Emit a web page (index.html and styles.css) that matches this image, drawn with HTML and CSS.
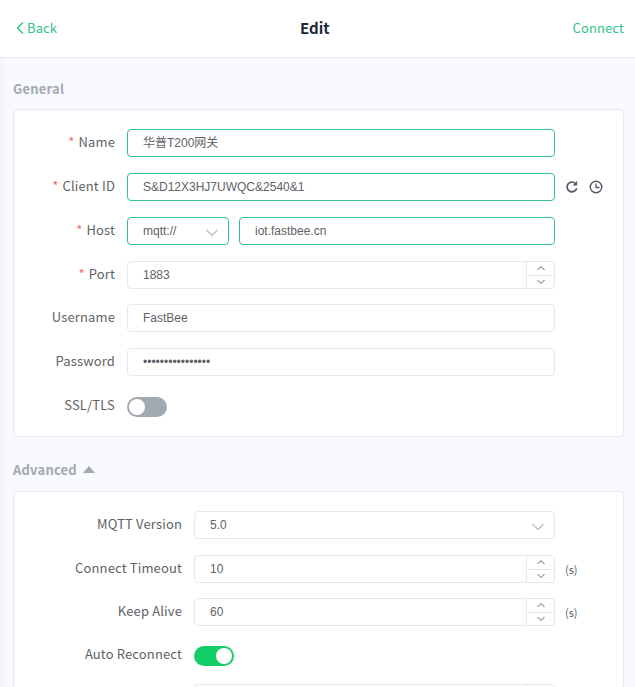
FILE: index.html
```html
<!DOCTYPE html>
<html lang="en">
<head>
<meta charset="utf-8">
<title>Edit</title>
<link rel="stylesheet" href="styles.css">
</head>
<body>
<div class="page">
  <header class="topbar">
    <a class="back"><svg class="back-icon" viewBox="0 0 8 14" width="8" height="14"><path d="M7 1.500 1.500 7 7 12.500" fill="none" stroke="currentColor" stroke-width="1.400"/></svg>Back</a>
    <h1 class="title">Edit</h1>
    <a class="connect">Connect</a>
  </header>

  <main class="content">
    <h2 class="section-title">General</h2>
    <section class="card card-general">
      <div class="row">
        <label class="label"><span class="req">*</span>Name</label>
        <div class="field field-active">华普T200网关</div>
      </div>
      <div class="row">
        <label class="label"><span class="req">*</span>Client ID</label>
        <div class="field field-active">S&amp;D12X3HJ7UWQC&amp;2540&amp;1</div>
        <div class="tools">
          <svg class="tool" viewBox="0 0 14 14" width="14" height="14"><path d="M11.700 8.200A4.900 4.900 0 1 1 10.300 3.300" fill="none" stroke="#555b66" stroke-width="1.700"/><path d="M12.200 .8v4.600H7.600z" fill="#555b66"/></svg>
          <svg class="tool" viewBox="0 0 14 14" width="14" height="14"><circle cx="7" cy="7" r="5.800" fill="none" stroke="#555b66" stroke-width="1.400"/><path d="M7 3.500V7.500H10.500" fill="none" stroke="#555b66" stroke-width="1.300"/></svg>
        </div>
      </div>
      <div class="row">
        <label class="label"><span class="req">*</span>Host</label>
        <div class="host">
          <div class="field field-active select-protocol">mqtt://<svg class="chevron" viewBox="0 0 14 8" width="14" height="8"><path d="M1.500 1 7 6.500 12.500 1" fill="none" stroke="#c0c4cc" stroke-width="1.500"/></svg></div>
          <div class="field field-active">iot.fastbee.cn</div>
        </div>
      </div>
      <div class="row row-tight">
        <label class="label"><span class="req">*</span>Port</label>
        <div class="field">1883
          <div class="spinner">
            <span class="spin"><svg viewBox="0 0 10 6" width="10" height="6"><path d="M1.500 5 5 1.500 8.500 5" fill="none" stroke="#606266" stroke-width="1"/></svg></span>
            <span class="spin"><svg viewBox="0 0 10 6" width="10" height="6"><path d="M1.500 1 5 4.500 8.500 1" fill="none" stroke="#606266" stroke-width="1"/></svg></span>
          </div>
        </div>
      </div>
      <div class="row">
        <label class="label">Username</label>
        <div class="field">FastBee</div>
      </div>
      <div class="row">
        <label class="label">Password</label>
        <div class="field">••••••••••••••••</div>
      </div>
      <div class="row row-switch">
        <label class="label">SSL/TLS</label>
        <span class="switch"></span>
      </div>
    </section>

    <h2 class="section-title section-advanced">Advanced<span class="caret"></span></h2>
    <section class="card card-advanced">
      <div class="row">
        <label class="label">MQTT Version</label>
        <div class="field">5.0<svg class="chevron" viewBox="0 0 14 8" width="14" height="8"><path d="M1.500 1 7 6.500 12.500 1" fill="none" stroke="#c0c4cc" stroke-width="1.500"/></svg></div>
      </div>
      <div class="row row-tight">
        <label class="label">Connect Timeout</label>
        <div class="field">10
          <div class="spinner">
            <span class="spin"><svg viewBox="0 0 10 6" width="10" height="6"><path d="M1.500 5 5 1.500 8.500 5" fill="none" stroke="#606266" stroke-width="1"/></svg></span>
            <span class="spin"><svg viewBox="0 0 10 6" width="10" height="6"><path d="M1.500 1 5 4.500 8.500 1" fill="none" stroke="#606266" stroke-width="1"/></svg></span>
          </div>
        </div>
        <span class="unit">(s)</span>
      </div>
      <div class="row">
        <label class="label">Keep Alive</label>
        <div class="field">60
          <div class="spinner">
            <span class="spin"><svg viewBox="0 0 10 6" width="10" height="6"><path d="M1.500 5 5 1.500 8.500 5" fill="none" stroke="#606266" stroke-width="1"/></svg></span>
            <span class="spin"><svg viewBox="0 0 10 6" width="10" height="6"><path d="M1.500 1 5 4.500 8.500 1" fill="none" stroke="#606266" stroke-width="1"/></svg></span>
          </div>
        </div>
        <span class="unit">(s)</span>
      </div>
      <div class="row row-switch row-reconnect">
        <label class="label">Auto Reconnect</label>
        <span class="switch switch-on"></span>
      </div>
      <div class="row">
        <label class="label"></label>
        <div class="field">
          <div class="spinner"></div>
        </div>
      </div>
    </section>
  </main>
</div>
</body>
</html>
```
FILE: styles.css
```css
* { box-sizing: border-box; }
html, body { margin: 0; padding: 0; height: 100%; overflow: hidden; }
body {
  font-family: "Noto Sans CJK SC", "Noto Sans", sans-serif;
  font-size: 13px;
  color: #606266;
  background: #f9fafe;
}
.page { height: 687px; overflow: hidden; position: relative; box-shadow: inset 5px 0 5px -4px rgba(40, 50, 90, .06); }
.topbar {
  height: 58px;
  display: flex;
  align-items: center;
  justify-content: space-between;
  padding: 0 11px 2px 16px;
  background: #fff;
  border-bottom: 1px solid #e6e8f1;
  color: #34c388;
  font-size: 13px;
  letter-spacing: .12px;
}
.back { display: flex; align-items: center; gap: 3px; }
.back-icon { display: block; }
.title { margin: 0; font-size: 15px; font-weight: 700; color: #1d2a38; letter-spacing: 0; }
.content { padding: 0 11px 0 13px; }
.section-title {
  margin: 0;
  padding-top: 22px;
  height: 51px;
  font-size: 13px;
  line-height: 18px;
  font-weight: 700;
  letter-spacing: .2px;
  color: #a2a9b0;
  display: flex;
  align-items: flex-start;
}
.section-advanced { padding-top: 24px; height: 54px; }
.caret {
  width: 0; height: 0;
  margin: 5px 0 0 6px;
  border: 6px solid transparent;
  border-top: 0;
  border-bottom: 7px solid #a2a9b0;
}
.card {
  background: #fff;
  border: 1px solid #e6e8f1;
  border-radius: 4px;
  padding-top: 19px;
}
.card-general { height: 328px; }
.card-advanced { height: 260px; }
.row {
  display: flex;
  align-items: center;
  height: 28px;
  margin-bottom: 16px;
}
.row-tight { margin-bottom: 15px; }
.row-switch { height: 20px; margin-top: 21px; }
.row-reconnect { margin-top: 20px; margin-bottom: 18px; }
.label {
  width: 113px;
  flex: none;
  padding-right: 12px;
  text-align: right;
  line-height: 20px;
  letter-spacing: .14px;
  margin-top: -3px;
}
.row-switch .label { margin-top: -4px; }
.card-advanced .label { width: 180px; }
.req { color: #f56c6c; margin-right: 4px; }
.field {
  position: relative;
  width: 428px;
  flex: none;
  height: 28px;
  line-height: 26px;
  padding-left: 15px;
  font-family: "Liberation Sans", "Noto Sans CJK SC", sans-serif;
  font-size: 12px;
  border: 1px solid #e6e8f1;
  border-radius: 4px;
  background: #fff;
}
.card-advanced .field { width: 361px; }
.field-active { border-color: #34c388; }
.host { display: flex; gap: 10px; width: 428px; flex: none; }
.host .field { width: 316px; }
.host .select-protocol { width: 102px; }
.chevron { position: absolute; right: 9px; top: 11px; }
.spinner {
  position: absolute;
  top: 0; right: 0; bottom: 0;
  width: 28px;
  border-left: 1px solid #e6e8f1;
  display: flex;
  flex-direction: column;
}
.spin {
  flex: 1;
  display: flex;
  align-items: center;
  justify-content: center;
}
.spin + .spin { border-top: 1px solid #e6e8f1; }
.tools { display: flex; gap: 10px; margin-left: 10px; }
.tool { display: block; }
.unit { margin-left: 10px; font-size: 11px; }
.switch {
  position: relative;
  display: block;
  width: 40px;
  height: 20px;
  border-radius: 10px;
  background: #a2a9b0;
}
.switch::after {
  content: "";
  position: absolute;
  top: 2px; left: 2px;
  width: 16px; height: 16px;
  border-radius: 50%;
  background: #fff;
}
.switch-on { background: #13ce66; }
.switch-on::after { left: 22px; }
```
